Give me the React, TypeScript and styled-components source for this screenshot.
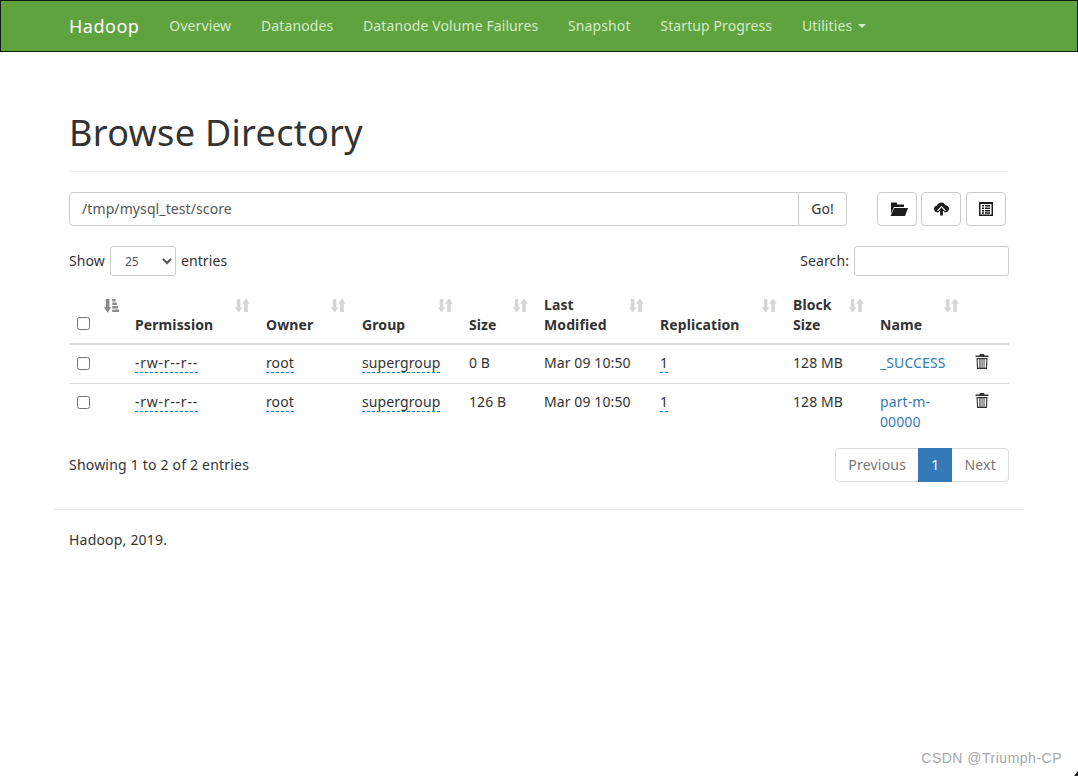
import React from 'react';
import styled, { createGlobalStyle } from 'styled-components';

const FONT = `"Noto Sans", "Open Sans", "Liberation Sans", sans-serif`;

const Global = createGlobalStyle`
  * { box-sizing: border-box; }
  html, body { margin: 0; padding: 0; background: #fff; }
  body { font-family: ${FONT}; font-size: 14px; line-height: 20px; color: #333; height: 776px; overflow: hidden; letter-spacing: 0.1px; }
`;

const Navbar = styled.nav`
  height: 52px; background: #5fa33e; border: 1px solid #141a10;
  display: flex; justify-content: center;
`;
const NavInner = styled.div`
  width: 970px; padding: 0 15px; display: flex; align-items: center; color: #fff;
`;
const Brand = styled.a`
  font-size: 18px; color: #fff; margin-right: 30px; letter-spacing: 0.5px;
`;
const NavLink = styled.a`
  color: #d5ecc8; margin-right: 29.8px; display: flex; align-items: center;
`;
const Caret = styled.span`
  width: 0; height: 0; margin-left: 6px; border-top: 4px solid #d5ecc8;
  border-left: 4px solid transparent; border-right: 4px solid transparent;
`;
const Container = styled.main`
  width: 970px; margin: 0 auto; padding: 0 15px;
`;
const Header = styled.header`
  margin-top: 61px; padding-bottom: 8px; border-bottom: 1px solid #eee; margin-bottom: 20px;
`;
const Title = styled.h1`
  font-size: 36px; font-weight: 400; line-height: 40px; margin: 20px 0 10px; color: #333; letter-spacing: 0.3px;
`;
const Toolbar = styled.div`
  display: flex; align-items: flex-start; height: 34px; margin-bottom: 20px;
`;
const PathGroup = styled.div`
  display: flex; width: 778px; height: 34px;
`;
const PathInput = styled.div`
  flex: 1; border: 1px solid #ccc; border-radius: 4px 0 0 4px; padding: 6px 12px; color: #555; height: 34px;
`;
const GoButton = styled.div`
  width: 48px; border: 1px solid #ccc; border-left: 0; border-radius: 0 4px 4px 0; text-align: center; padding: 6px 0; height: 34px;
`;
const IconButtons = styled.div`
  display: flex; margin-left: 30px; gap: 4px;
`;
const IconButton = styled.div`
  width: 40px; height: 34px; border: 1px solid #ccc; border-radius: 4px;
  display: flex; align-items: center; justify-content: center;
  &:last-child { margin-left: 1px; }
`;
const Controls = styled.div`
  display: flex; justify-content: space-between; align-items: center; height: 30px;
`;
const Label = styled.label`
  display: flex; align-items: center; gap: 5px; line-height: 18px;
`;
const FakeSelect = styled.select`
  width: 66px; height: 30px; border: 1px solid #ccc; border-radius: 3px; background: #fff; color: #555;
  font: 12px ${FONT}; padding: 0 10px;
`;
const SearchBox = styled.input`
  width: 155px; height: 30px; border: 1px solid #ccc; border-radius: 3px; background: #fff;
`;
const Table = styled.table`
  width: 940px; table-layout: fixed; border-collapse: collapse; margin-top: 11px; margin-bottom: 8px;
`;
const HeadCell = styled.th`
  position: relative; vertical-align: bottom; text-align: left; padding: 8px 30px 8px 8px; font-weight: 700;
  border-bottom: 2px solid #ddd; height: 55px; line-height: 20px;
`;
const Cell = styled.td<{ $last?: boolean }>`
  vertical-align: top; padding: 8px; line-height: 20px; height: 39px;
  border-bottom: ${p => (p.$last ? '0' : '1px solid #ddd')};
`;
const SortIcon = styled.svg<{ $dark?: boolean }>`
  position: absolute; top: 11px; right: 8px; width: 15px; height: 15px; fill: ${p => (p.$dark ? '#8a8a8a' : '#d6d6d6')};
`;
const Check = styled.input`
  width: 13px; height: 13px; margin: 4px 0 0; display: block; accent-color: #777;
`;
const HeadCheck = styled(Check)`
  margin-bottom: 5px;
`;
const Editable = styled.span`
  color: #333; border-bottom: 1px dashed #08c;
`;
const PermEditable = styled(Editable)`
  letter-spacing: 0.75px;
`;
const FileLink = styled.a`
  color: #337ab7;
`;
const Trash = styled.svg`
  width: 14px; height: 15px; display: block; margin-top: 1px;
`;
const Footer = styled.div`
  display: flex; justify-content: space-between; align-items: center; height: 34px;
`;
const Summary = styled.span`
  letter-spacing: 0.2px; line-height: 18px;
`;
const Pager = styled.div`
  display: flex; height: 34px; letter-spacing: 0.22px;
`;
const PagerButton = styled.div<{ $active?: boolean; $first?: boolean; $last?: boolean }>`
  padding: 6px 12px; height: 34px; color: ${p => (p.$active ? '#fff' : '#777')};
  background: ${p => (p.$active ? '#337ab7' : '#fff')};
  border: 1px solid ${p => (p.$active ? '#337ab7' : '#ddd')};
  margin-left: ${p => (p.$first ? 0 : -1)}px;
  border-radius: ${p => (p.$first ? '4px 0 0 4px' : p.$last ? '0 4px 4px 0' : '0')};
  ${p => (p.$active ? 'position: relative; z-index: 1;' : '')}
`;
const Rule = styled.hr`
  width: 970px; margin: 27px auto 0; border: 0; border-top: 1px solid #eee;
`;
const Copy = styled.p`
  width: 970px; margin: 20px auto 0; padding: 0 15px; letter-spacing: 0.2px;
`;
const Watermark = styled.div`
  position: absolute; right: 16px; bottom: 10px; font: 14px "Liberation Sans", sans-serif; color: #a8a8a8; letter-spacing: 0.5px;
`;
const WindowCorner = styled.div`
  position: absolute; right: 0; bottom: 0; width: 0; height: 0;
  border-left: 4px solid transparent; border-bottom: 5px solid #222;
`;

const Sort = () => (
  <SortIcon viewBox="0 0 15 15">
    <path d="M1.800 1h3.600v8.200h2L3.600 14.800-.2 9.200h2zM11 .2l3.800 5.600h-2V14H9.200V5.800h-2z" />
  </SortIcon>
);
const SortActive = () => (
  <SortIcon $dark viewBox="0 0 15 15">
    <path d="M1.800 1h3.600v8.200h2L3.600 14.800-.2 9.200h2zM8.200 11.500H15V14H8.200zM8.200 8H14v2.400H8.200zM8.200 4.500H12.800v2.400H8.200zM8.200 1h3.400v2.400H8.200z" />
  </SortIcon>
);
const TrashIcon = () => (
  <Trash viewBox="0 0 14 15">
    <path
      fill="#333"
      fillRule="evenodd"
      d="M5 0h4l.6 1.500H13.500v1.500H.5V1.500h3.900zM1.500 4h11L12 15H2zM2.700 5.200l.4 8.600h1.300V5.200zm2.800 0v8.600h1.100V5.200zm2 0v8.600h1.100V5.200zm2 0v8.600h1.400l.4-8.600z"
    />
  </Trash>
);

const rows = [
  { size: '0 B', name: '_SUCCESS' },
  { size: '126 B', name: 'part-m-00000' },
];
const widths = [58, 131, 96, 107, 75, 116, 133, 87, 95, 42];

export default function App() {
  return (
    <>
      <Global />
      <Navbar>
        <NavInner>
          <Brand>Hadoop</Brand>
          <NavLink>Overview</NavLink>
          <NavLink>Datanodes</NavLink>
          <NavLink>Datanode Volume Failures</NavLink>
          <NavLink>Snapshot</NavLink>
          <NavLink>Startup Progress</NavLink>
          <NavLink>Utilities<Caret /></NavLink>
        </NavInner>
      </Navbar>
      <Container>
        <Header><Title>Browse Directory</Title></Header>
        <Toolbar>
          <PathGroup>
            <PathInput>/tmp/mysql_test/score</PathInput>
            <GoButton>Go!</GoButton>
          </PathGroup>
          <IconButtons>
            <IconButton>
              <svg width="22" height="14" viewBox="-4 0 22 14"><path fill="#1c1c1c" d="M1 .5h5.500l1 2H14v2.500H4L1 11.500zM4.200 6H18l-3 8H.6z" /></svg>
            </IconButton>
            <IconButton>
              <svg width="15" height="14" viewBox="0 0 16 14"><path fill="#1c1c1c" d="M8 0c2 0 3.500 1.300 4 3 2 0 4 1.500 4 3.500S14.500 10.500 13 10.500h-2.200V8.800H13L8 3.500 3 8.800h2.200v1.700H3C1.400 10.500 0 8.500 0 6.700 0 5 1.200 3.800 3 3.500 3.500 1.500 5.800 0 8 0zM8 5.500l3.500 3.500h-2V14h-3V9h-2z" /></svg>
            </IconButton>
            <IconButton>
              <svg width="14" height="14" viewBox="0 0 14 14"><path fill="#1c1c1c" fillRule="evenodd" d="M0 0h14v14H0zM1.500 2v10.500h11V2zM3 3h2v1.500H3zm3 0h5v1.500H6zM3 5.500h2V7H3zm3 0h5V7H6zM3 8h2v1.500H3zm3 0h5v1.500H6zM3 10.300h2v1.400H3zm3 0h5v1.400H6z" /></svg>
            </IconButton>
          </IconButtons>
        </Toolbar>
        <Controls>
          <Label>Show <FakeSelect defaultValue="25"><option>25</option></FakeSelect> entries</Label>
          <Label>Search: <SearchBox /></Label>
        </Controls>
        <Table>
          <colgroup>{widths.map((w, i) => <col key={i} width={w} />)}</colgroup>
          <thead>
            <tr>
              <HeadCell><HeadCheck type="checkbox" /><SortActive /></HeadCell>
              <HeadCell>Permission<Sort /></HeadCell>
              <HeadCell>Owner<Sort /></HeadCell>
              <HeadCell>Group<Sort /></HeadCell>
              <HeadCell>Size<Sort /></HeadCell>
              <HeadCell>Last Modified<Sort /></HeadCell>
              <HeadCell>Replication<Sort /></HeadCell>
              <HeadCell>Block Size<Sort /></HeadCell>
              <HeadCell>Name<Sort /></HeadCell>
              <HeadCell />
            </tr>
          </thead>
          <tbody>
            {rows.map((r, i) => {
              const last = i === rows.length - 1;
              return (
                <tr key={r.name}>
                  <Cell $last={last}><Check type="checkbox" /></Cell>
                  <Cell $last={last}><PermEditable>-rw-r--r--</PermEditable></Cell>
                  <Cell $last={last}><Editable>root</Editable></Cell>
                  <Cell $last={last}><Editable>supergroup</Editable></Cell>
                  <Cell $last={last}>{r.size}</Cell>
                  <Cell $last={last}>Mar 09 10:50</Cell>
                  <Cell $last={last}><Editable>1</Editable></Cell>
                  <Cell $last={last}>128 MB</Cell>
                  <Cell $last={last}><FileLink>{r.name}</FileLink></Cell>
                  <Cell $last={last}><TrashIcon /></Cell>
                </tr>
              );
            })}
          </tbody>
        </Table>
        <Footer>
          <Summary>Showing 1 to 2 of 2 entries</Summary>
          <Pager>
            <PagerButton $first>Previous</PagerButton>
            <PagerButton $active>1</PagerButton>
            <PagerButton $last>Next</PagerButton>
          </Pager>
        </Footer>
      </Container>
      <Rule />
      <Copy>Hadoop, 2019.</Copy>
      <Watermark>CSDN @Triumph-CP</Watermark>
      <WindowCorner />
    </>
  );
}
